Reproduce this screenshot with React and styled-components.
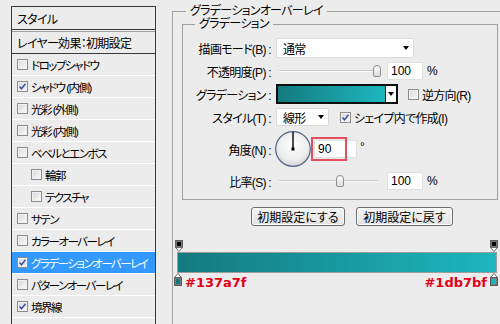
import React from "react";
import styled, { createGlobalStyle } from "styled-components";

const GlobalStyle = createGlobalStyle`
  *, *::before, *::after { box-sizing: border-box; }
  html, body { margin: 0; padding: 0; background: #ececec; }
  body {
    font-family: "Liberation Sans", "Noto Sans CJK JP", sans-serif;
    font-size: 12px;
    color: #000;
    letter-spacing: -0.7px;
    font-feature-settings: "palt" 1;
  }
`;

const Page = styled.div`
  display: flex;
  width: 500px;
  height: 324px;
  overflow: hidden;
  background: #ececec;
`;

/* ---------- left: style list ---------- */
const LeftCol = styled.div`
  flex: none;
  width: 156px;
  height: 324px;
  padding: 6px 0 0 11px;
`;

const Panel = styled.div`
  display: flex;
  flex-direction: column;
  height: 100%;
  border: 1px solid #3a3a3a;
  border-bottom: none;
`;

const PanelHeader = styled.div`
  height: 23px;
  display: flex;
  align-items: center;
  padding-left: 5px;
  border-bottom: 1px solid #3a3a3a;
`;

const EffectsHeader = styled.div`
  height: 23px;
  margin-top: 1px;
  display: flex;
  align-items: center;
  padding-left: 5px;
  border-top: 1px solid #a4a4a4;
  border-bottom: 1px solid #3a3a3a;
`;

const Row = styled.div`
  height: 22px;
  flex: none;
  display: flex;
  align-items: center;
  gap: 3px;
  padding-left: ${(p) => (p.$indent ? 19 : 5)}px;
  border-bottom: 1px solid #ffffff;
  background: ${(p) => (p.$selected ? "#3399ff" : "transparent")};
  color: ${(p) => (p.$selected ? "#ffffff" : "#000000")};
  white-space: nowrap;
  font-size: 11.5px;
  letter-spacing: -1.5px;
`;

const Box = styled.span`
  flex: none;
  width: 11px;
  height: 11px;
  display: inline-flex;
  align-items: center;
  justify-content: center;
  border: 1px solid #8c8d8f;
  background: linear-gradient(135deg, #d6d6d6 0%, #ececec 55%, #fbfbfb 100%);
  box-shadow: inset 0 0 0 1px #f2f2f2;
`;

const CheckBox = ({ checked }) => (
  <Box>
    {checked && (
      <svg width="9" height="9" viewBox="0 0 9 9">
        <path d="M1.5 4.5 L3.5 6.8 L7.5 1.8" fill="none" stroke="#4252a8" strokeWidth="1.6" />
      </svg>
    )}
  </Box>
);

const effects = [
  { label: "ドロップシャドウ" },
  { label: "シャドウ (内側)", checked: true },
  { label: "光彩 (外側)" },
  { label: "光彩 (内側)" },
  { label: "ベベルとエンボス" },
  { label: "輪郭", indent: true },
  { label: "テクスチャ", indent: true },
  { label: "サテン" },
  { label: "カラーオーバーレイ" },
  { label: "グラデーションオーバーレイ", checked: true, selected: true },
  { label: "パターンオーバーレイ" },
  { label: "境界線", checked: true },
];

/* ---------- right: group boxes ---------- */
const RightCol = styled.div`
  flex: 1;
  min-width: 0;
  margin-left: 16px;
  padding-top: 5px;
`;

const OuterGroup = styled.fieldset`
  margin: 0;
  min-width: 0;
  height: 330px;
  padding: 1px 0 0 4px;
  border: 1px solid #a0a0a0;
  border-right: none;
  border-bottom: none;
`;

const InnerGroup = styled.fieldset`
  margin: 0 0 0 5px;
  min-width: 0;
  width: 316px;
  padding: 8px 0 9px 0;
  border: 1px solid #a0a0a0;
`;

const Legend = styled.legend`
  padding: 0 4px;
  margin-left: ${(p) => p.$offset}px;
  line-height: 12px;
  font-size: 12px;
  white-space: nowrap;
`;

const FormGrid = styled.div`
  display: grid;
  grid-template-columns: 88px 1fr;
  grid-template-rows: 20px 18px 20px 18px 38px 18px;
  column-gap: 5px;
  row-gap: 4px;
`;

const Label = styled.div`
  justify-self: end;
  align-self: center;
  white-space: nowrap;
`;

const Cell = styled.div`
  display: flex;
  align-items: center;
  min-width: 0;
`;

const Select = styled.div`
  width: ${(p) => p.$w}px;
  height: ${(p) => p.$h}px;
  background: #fff;
  border: 1px solid #dadada;
  border-radius: 2px;
  display: flex;
  align-items: center;
  justify-content: space-between;
  padding: 0 4px 0 6px;
`;

const Arrow = styled.span`
  width: 0;
  height: 0;
  border-left: 3.5px solid transparent;
  border-right: 3.5px solid transparent;
  border-top: 4px solid #000;
`;

const SliderWrap = styled.div`
  position: relative;
  width: 102px;
  height: 18px;
  margin-left: 2px;
  &::before {
    content: "";
    position: absolute;
    left: 1px;
    right: 2px;
    top: 8px;
    height: 2px;
    background: #c9c9c9;
    border-bottom: 1px solid #fafafa;
  }
`;

const Thumb = styled.span`
  position: absolute;
  top: 3px;
  width: 8px;
  height: 12px;
  border: 1px solid #8d8d8d;
  border-radius: 4px 4px 2px 2px;
  background: linear-gradient(#fdfdfd, #dcdcdc);
`;

const Slider = ({ pos }) => (
  <SliderWrap>
    <Thumb style={{ left: `${3 + pos * 96 - 4}px` }} />
  </SliderWrap>
);

const NumInput = styled.input`
  width: ${(p) => p.$w}px;
  height: 18px;
  margin: 0 0 0 ${(p) => p.$ml}px;
  padding: 0 0 0 3px;
  border: 1px solid #e0e0e0;
  background: #fff;
  font: inherit;
  font-size: 12px;
  letter-spacing: 0;
  color: #000;
  outline: none;
`;

const Unit = styled.span`
  margin-left: ${(p) => p.$ml}px;
  margin-top: ${(p) => p.$mt || 0}px;
`;

const GradPicker = styled.div`
  display: flex;
  width: 122px;
  height: 20px;
  border: 2px solid #0e0e0e;
`;

const Swatch = styled.div`
  flex: 1;
  background: linear-gradient(to right, #137a7f, #1db7bf);
`;

const DropBtn = styled.div`
  width: 11px;
  display: flex;
  align-items: center;
  justify-content: center;
  background: #fff;
  border-left: 1px solid #0e0e0e;
`;

const CheckLabel = styled.label`
  display: flex;
  align-items: center;
  gap: 3px;
  margin-left: ${(p) => p.$ml}px;
  white-space: nowrap;
`;

const DialSvg = styled.svg`
  flex: none;
  margin-left: -1px;
`;

const AngleField = styled.div`
  position: relative;
  margin-left: 3px;
  display: flex;
`;

const RedMark = styled.span`
  position: absolute;
  left: -3px;
  top: -3px;
  width: 36px;
  height: 24px;
  border: 2px solid #e64e60;
  pointer-events: none;
`;

const ButtonRow = styled.div`
  display: flex;
  gap: 11px;
  margin: 7px 0 0 74px;
`;

const Button = styled.button`
  width: ${(p) => p.$w}px;
  height: 19px;
  padding: 0;
  font: inherit;
  font-size: 12px;
  color: #000;
  border: 1px solid #6f6f6f;
  border-radius: 3px;
  background: linear-gradient(#f6f6f6, #e2e2e2);
  box-shadow: inset 0 0 0 1px #fbfbfb;
`;

const GradEditor = styled.div`
  width: 320px;
  margin-top: 14px;
`;

const StopsRow = styled.div`
  display: flex;
  justify-content: space-between;
  align-items: flex-start;
  margin: ${(p) => p.$m};
`;

const Bar = styled.div`
  height: 21px;
  border: 1px solid #9c9c9c;
  background: linear-gradient(to right, #137a7f, #1db7bf);
`;

const StopGroup = styled.div`
  display: flex;
  align-items: flex-start;
  gap: 3px;
`;

const Hex = styled.span`
  margin-top: 3px;
  font-family: "DejaVu Sans", "Liberation Sans", sans-serif;
  font-weight: bold;
  font-size: 13px;
  line-height: 14px;
  letter-spacing: 0;
  color: #e4001b;
  font-feature-settings: normal;
`;

const TopStop = () => (
  <svg width="8" height="12" viewBox="0 0 8 12">
    <rect x="0.5" y="0.5" width="7" height="7" fill="#7a7a7a" stroke="#5c5c5c" />
    <rect x="2" y="2" width="4" height="4" fill="#0a0008" />
    <path d="M0.5 7.5 H7.5 L4 11.5 Z" fill="#fff" stroke="#6a6a6a" />
  </svg>
);

const BottomStop = ({ color }) => (
  <svg width="8" height="13" viewBox="0 0 8 13">
    <path d="M4 0.5 L7.5 4.5 H0.5 Z" fill="#fff" stroke="#6a6a6a" />
    <rect x="0.5" y="4.5" width="7" height="8" fill="#7a7a7a" stroke="#5c5c5c" />
    <rect x="2" y="6" width="4" height="5" fill={color} />
  </svg>
);

export default function App() {
  return (
    <>
      <GlobalStyle />
      <Page>
        <LeftCol>
          <Panel>
            <PanelHeader>スタイル</PanelHeader>
            <EffectsHeader>レイヤー効果：初期設定</EffectsHeader>
            {effects.map((e) => (
              <Row key={e.label} $indent={e.indent} $selected={e.selected}>
                <CheckBox checked={e.checked} />
                <span>{e.label}</span>
              </Row>
            ))}
          </Panel>
        </LeftCol>

        <RightCol>
          <OuterGroup>
            <Legend $offset={9}>グラデーションオーバーレイ</Legend>
            <InnerGroup>
              <Legend $offset={12}>グラデーション</Legend>
              <FormGrid>
                <Label>描画モード(B) :</Label>
                <Cell>
                  <Select $w={138} $h={20}>
                    <span>通常</span>
                    <Arrow />
                  </Select>
                </Cell>

                <Label>不透明度(P) :</Label>
                <Cell>
                  <Slider pos={1} />
                  <NumInput $w={36} $ml={7} readOnly value="100" />
                  <Unit $ml={4}>%</Unit>
                </Cell>

                <Label>グラデーション :</Label>
                <Cell>
                  <GradPicker>
                    <Swatch />
                    <DropBtn>
                      <Arrow />
                    </DropBtn>
                  </GradPicker>
                  <CheckLabel $ml={10}>
                    <CheckBox />
                    <span>逆方向(R)</span>
                  </CheckLabel>
                </Cell>

                <Label>スタイル(T) :</Label>
                <Cell>
                  <Select $w={53} $h={18}>
                    <span>線形</span>
                    <Arrow />
                  </Select>
                  <CheckLabel $ml={11}>
                    <CheckBox checked />
                    <span>シェイプ内で作成(I)</span>
                  </CheckLabel>
                </Cell>

                <Label>角度(N) :</Label>
                <Cell>
                  <DialSvg width="36" height="36" viewBox="0 0 36 36">
                    <defs>
                      <radialGradient id="dialFill" cx="50%" cy="40%" r="60%">
                        <stop offset="0%" stopColor="#ffffff" />
                        <stop offset="70%" stopColor="#ededed" />
                        <stop offset="100%" stopColor="#d4d4d4" />
                      </radialGradient>
                    </defs>
                    <circle cx="18" cy="18" r="17.3" fill="url(#dialFill)" stroke="#55668a" strokeWidth="1.2" />
                    <line x1="18" y1="18" x2="18" y2="0.8" stroke="#000" strokeWidth="1.4" />
                    <rect x="16.5" y="16.5" width="3" height="3" fill="#000" />
                  </DialSvg>
                  <AngleField>
                    <NumInput $w={43} $ml={0} readOnly value="90" />
                    <RedMark />
                  </AngleField>
                  <Unit $ml={3} $mt={-4}>°</Unit>
                </Cell>

                <Label>比率(S) :</Label>
                <Cell>
                  <Slider pos={0.615} />
                  <NumInput $w={36} $ml={7} readOnly value="100" />
                  <Unit $ml={4}>%</Unit>
                </Cell>
              </FormGrid>
            </InnerGroup>

            <ButtonRow>
              <Button $w={94}>初期設定にする</Button>
              <Button $w={97}>初期設定に戻す</Button>
            </ButtonRow>

            <GradEditor>
              <StopsRow $m="0 -1px 0 -2px">
                <TopStop />
                <TopStop />
              </StopsRow>
              <Bar />
              <StopsRow $m="0 -1px 0 -3px">
                <StopGroup>
                  <BottomStop color="#137a7f" />
                  <Hex>#137a7f</Hex>
                </StopGroup>
                <StopGroup>
                  <Hex>#1db7bf</Hex>
                  <BottomStop color="#1db7bf" />
                </StopGroup>
              </StopsRow>
            </GradEditor>
          </OuterGroup>
        </RightCol>
      </Page>
    </>
  );
}
